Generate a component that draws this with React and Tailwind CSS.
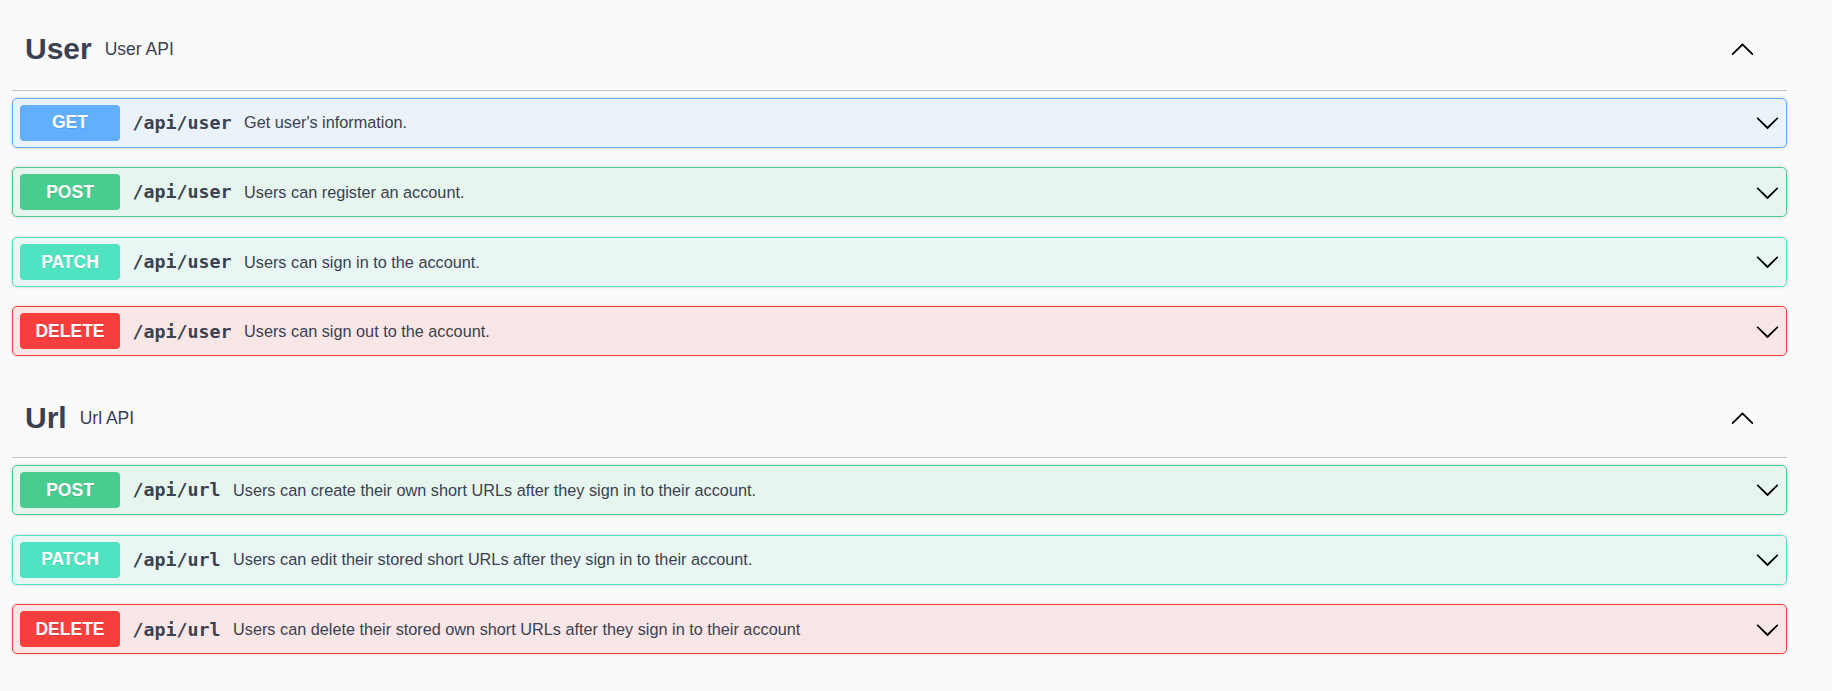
import React from 'react';

const METHOD_STYLES = {
  GET: { block: 'border-[#61affe] bg-[#61affe]/10', badge: 'bg-[#61affe]' },
  POST: { block: 'border-[#49cc90] bg-[#49cc90]/10', badge: 'bg-[#49cc90]' },
  PATCH: { block: 'border-[#50e3c2] bg-[#50e3c2]/10', badge: 'bg-[#50e3c2]' },
  DELETE: { block: 'border-[#f93e3e] bg-[#f93e3e]/10', badge: 'bg-[#f93e3e]' },
};

const sections = [
  {
    name: 'User',
    description: 'User API',
    headerClass: 'h-[86px]',
    operations: [
      { method: 'GET', path: '/api/user', summary: "Get user's information." },
      { method: 'POST', path: '/api/user', summary: 'Users can register an account.' },
      { method: 'PATCH', path: '/api/user', summary: 'Users can sign in to the account.' },
      { method: 'DELETE', path: '/api/user', summary: 'Users can sign out to the account.' },
    ],
  },
  {
    name: 'Url',
    description: 'Url API',
    headerClass: 'h-[82.3px]',
    operations: [
      {
        method: 'POST',
        path: '/api/url',
        summary: 'Users can create their own short URLs after they sign in to their account.',
      },
      {
        method: 'PATCH',
        path: '/api/url',
        summary: 'Users can edit their stored short URLs after they sign in to their account.',
      },
      {
        method: 'DELETE',
        path: '/api/url',
        summary: 'Users can delete their stored own short URLs after they sign in to their account',
      },
    ],
  },
];

// swagger-ui style arrows
function ArrowDown() {
  return (
    <svg width="25" height="25" viewBox="0 0 20 20" className="shrink-0" aria-hidden="true">
      <path
        fill="#000"
        d="M17.418 6.109c.272-.268.709-.268.979 0s.271.701 0 .969l-7.908 7.83c-.27.268-.707.268-.979 0l-7.908-7.83c-.27-.268-.27-.701 0-.969.271-.268.709-.268.979 0L10 13.25l7.418-7.141z"
      />
    </svg>
  );
}

function ArrowUp() {
  return (
    <svg width="25" height="25" viewBox="0 0 20 20" className="shrink-0" aria-hidden="true">
      <path
        fill="#000"
        d="M17.418 14.908c.272.268.709.268.979 0s.271-.701 0-.969l-7.908-7.83c-.27-.268-.707-.268-.979 0l-7.908 7.83c-.27.268-.27.701 0 .969.271.268.709.268.979 0L10 7.767l7.418 7.141z"
      />
    </svg>
  );
}

function Operation({ op }) {
  const style = METHOD_STYLES[op.method];
  return (
    <div
      className={`mb-[19.67px] flex h-[50px] items-center rounded-[5px] border pl-[7px] pr-[6px] shadow-[0_0_3px_rgba(0,0,0,0.19)] ${style.block}`}
    >
      <span
        className={`flex h-[36px] w-[100px] shrink-0 items-center justify-center rounded-[4px] text-[17.5px] font-bold text-white [text-shadow:0_1px_0_rgba(0,0,0,0.1)] ${style.badge}`}
      >
        {op.method}
      </span>
      <span className="px-[12.5px] font-['DejaVu_Sans_Mono',monospace] text-[18.3px] font-bold text-[#3b4151]">
        {op.path}
      </span>
      <span className="flex-1 text-[16.25px] text-[#3b4151]">{op.summary}</span>
      <ArrowDown />
    </div>
  );
}

export default function App() {
  return (
    <div className="min-h-screen bg-[#fafafa] pt-[5px] font-['Liberation_Sans',Arial,sans-serif]">
      <div className="ml-[12px] mr-[45px]">
        {sections.map((section) => (
          <div key={section.name}>
            {/* Tag header */}
            <div
              className={`flex items-center border-b border-[rgba(59,65,81,0.3)] pl-[13px] pr-[32px] pt-[1px] text-[#3b4151] ${section.headerClass}`}
            >
              <span className="text-[30px] font-bold">{section.name}</span>
              <span className="flex-1 px-[13px] pt-[2px] text-[17.5px]">{section.description}</span>
              <ArrowUp />
            </div>

            {/* Operations */}
            <div className="pt-[6.5px]">
              {section.operations.map((op) => (
                <Operation key={op.method + op.path} op={op} />
              ))}
            </div>
          </div>
        ))}
      </div>
    </div>
  );
}
